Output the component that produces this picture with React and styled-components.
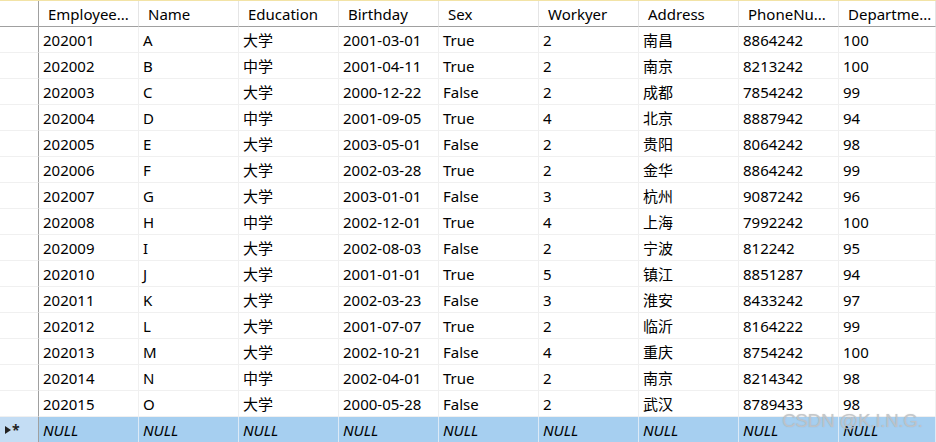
import React from "react";
import styled, { createGlobalStyle } from "styled-components";

const GlobalStyle = createGlobalStyle`
  html, body {
    margin: 0;
    padding: 0;
    background: #ffffff;
  }
  body {
    font-family: "Noto Sans", "Noto Sans CJK SC", sans-serif;
  }
`;

const columns = [
  "Employee...",
  "Name",
  "Education",
  "Birthday",
  "Sex",
  "Workyer",
  "Address",
  "PhoneNu...",
  "Departme...",
];

const rows = [
  ["202001", "A", "大学", "2001-03-01", "True", "2", "南昌", "8864242", "100"],
  ["202002", "B", "中学", "2001-04-11", "True", "2", "南京", "8213242", "100"],
  ["202003", "C", "大学", "2000-12-22", "False", "2", "成都", "7854242", "99"],
  ["202004", "D", "中学", "2001-09-05", "True", "4", "北京", "8887942", "94"],
  ["202005", "E", "大学", "2003-05-01", "False", "2", "贵阳", "8064242", "98"],
  ["202006", "F", "大学", "2002-03-28", "True", "2", "金华", "8864242", "99"],
  ["202007", "G", "大学", "2003-01-01", "False", "3", "杭州", "9087242", "96"],
  ["202008", "H", "中学", "2002-12-01", "True", "4", "上海", "7992242", "100"],
  ["202009", "I", "大学", "2002-08-03", "False", "2", "宁波", "812242", "95"],
  ["202010", "J", "大学", "2001-01-01", "True", "5", "镇江", "8851287", "94"],
  ["202011", "K", "大学", "2002-03-23", "False", "3", "淮安", "8433242", "97"],
  ["202012", "L", "大学", "2001-07-07", "True", "2", "临沂", "8164222", "99"],
  ["202013", "M", "大学", "2002-10-21", "False", "4", "重庆", "8754242", "100"],
  ["202014", "N", "中学", "2002-04-01", "True", "2", "南京", "8214342", "98"],
  ["202015", "O", "大学", "2000-05-28", "False", "2", "武汉", "8789433", "98"],
];

const Wrap = styled.div`
  position: relative;
  width: 936px;
  height: 442px;
  overflow: hidden;
  border-top: 1px solid #f2e3a6;
  box-sizing: border-box;
`;

const Grid = styled.div`
  display: grid;
  grid-template-columns: 39px repeat(8, 100px) 97px;
  grid-auto-rows: 26px;
  grid-template-rows: 26px;
  font-size: 15px;
  color: #000;
`;

const HeadCorner = styled.div`
  border-right: 1px solid #a0a0a0;
  border-bottom: 1px solid #a0a0a0;
  background: #fff;
`;

const HeadCell = styled.div`
  display: flex;
  align-items: center;
  padding-left: 9px;
  white-space: nowrap;
  overflow: hidden;
  border-right: 1px solid #e5e5e5;
  border-bottom: 1px solid #a0a0a0;
  background: #fff;
`;

const RowHead = styled.div`
  display: flex;
  align-items: center;
  padding-left: 4px;
  font-size: 12px;
  border-right: 1px solid #a0a0a0;
  border-bottom: 1px solid ${({ $new }) => ($new ? "transparent" : "#f0f0f0")};
  background: ${({ $new }) => ($new ? "#c4ddf4" : "#fff")};
`;

const Cell = styled.div`
  display: flex;
  align-items: center;
  padding-left: 4px;
  white-space: nowrap;
  overflow: hidden;
  font-style: ${({ $new }) => ($new ? "italic" : "normal")};
  border-right: 1px solid ${({ $new }) => ($new ? "#dceaf7" : "#f0f0f0")};
  border-bottom: 1px solid ${({ $new }) => ($new ? "transparent" : "#f0f0f0")};
  background: ${({ $new }) => ($new ? "#a6cff0" : "#fff")};
`;

const Marker = styled.span`
  display: inline-flex;
  align-items: center;
  color: #222;
  letter-spacing: -1px;
`;

const Star = styled.span`
  font-size: 14px;
  font-weight: 700;
`;

const Watermark = styled.div`
  position: absolute;
  left: 782px;
  top: 409px;
  white-space: nowrap;
  font-family: "Liberation Sans", "Noto Sans", sans-serif;
  font-size: 19px;
  letter-spacing: -0.4px;
  color: rgba(196, 198, 200, 0.85);
  text-shadow: 0 0 1px rgba(120, 120, 120, 0.35);
  pointer-events: none;
`;

export default function App() {
  return (
    <>
      <GlobalStyle />
      <Wrap>
        <Grid>
          <HeadCorner />
          {columns.map((c) => (
            <HeadCell key={c}>{c}</HeadCell>
          ))}
          {rows.map((r) => (
            <React.Fragment key={r[0]}>
              <RowHead />
              {r.map((v, i) => (
                <Cell key={i}>{v}</Cell>
              ))}
            </React.Fragment>
          ))}
          <RowHead $new>
            <Marker>
              <svg width="8" height="10" viewBox="0 0 8 10">
                <path d="M1 1 L7 5 L1 9 Z" fill="#222" />
              </svg>
              <Star>*</Star>
            </Marker>
          </RowHead>
          {columns.map((c) => (
            <Cell $new key={c}>
              NULL
            </Cell>
          ))}
        </Grid>
        <Watermark>CSDN @K.I.N.G.</Watermark>
      </Wrap>
    </>
  );
}
